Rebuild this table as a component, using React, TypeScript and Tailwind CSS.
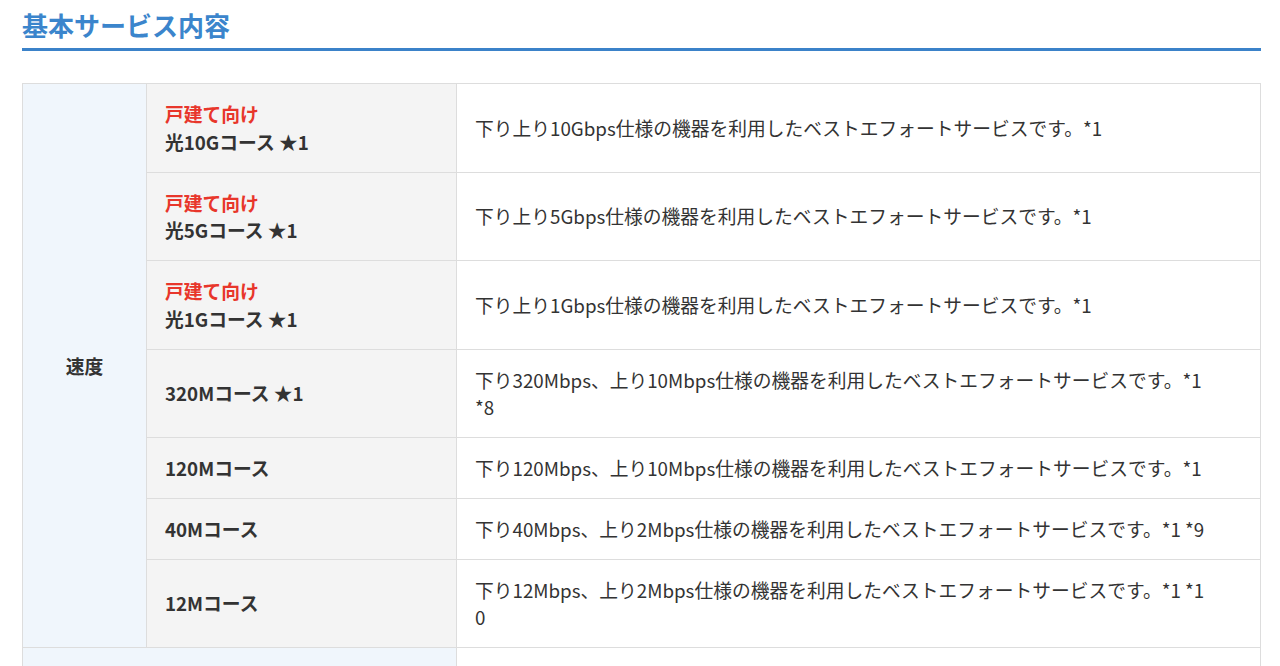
import React from 'react';

type Row = {
  tag?: string;
  name: string;
  desc: React.ReactNode;
};

const ROWS: Row[] = [
  { tag: '戸建て向け', name: '光10Gコース ★1', desc: '下り上り10Gbps仕様の機器を利用したベストエフォートサービスです。*1' },
  { tag: '戸建て向け', name: '光5Gコース ★1', desc: '下り上り5Gbps仕様の機器を利用したベストエフォートサービスです。*1' },
  { tag: '戸建て向け', name: '光1Gコース ★1', desc: '下り上り1Gbps仕様の機器を利用したベストエフォートサービスです。*1' },
  {
    name: '320Mコース ★1',
    desc: (
      <>
        下り320Mbps、上り10Mbps仕様の機器を利用したベストエフォートサービスです。*1
        <br />
        *8
      </>
    ),
  },
  { name: '120Mコース', desc: '下り120Mbps、上り10Mbps仕様の機器を利用したベストエフォートサービスです。*1' },
  { name: '40Mコース', desc: '下り40Mbps、上り2Mbps仕様の機器を利用したベストエフォートサービスです。*1 *9' },
  {
    name: '12Mコース',
    desc: (
      <>
        下り12Mbps、上り2Mbps仕様の機器を利用したベストエフォートサービスです。*1 *1
        <br />0
      </>
    ),
  },
];

export default function App() {
  return (
    <div className="min-h-screen bg-white pl-[22px] pr-[19px] font-['Noto_Sans_CJK_JP',sans-serif] text-[#333333]">
      <h2 className="border-b-[3px] border-[#3b82c9] pt-[5px] pb-[4px] text-[26px] font-bold leading-[39px] text-[#3b85cc]">
        基本サービス内容
      </h2>

      <table className="mt-[32px] w-full table-fixed border-collapse border border-[#dddddd] text-[18.75px] leading-[27.75px]">
        <colgroup>
          <col className="w-[124px]" />
          <col className="w-[310px]" />
          <col />
        </colgroup>
        <tbody>
          {ROWS.map((row, idx) => (
            <tr key={idx}>
              {idx === 0 && (
                <th
                  rowSpan={ROWS.length}
                  className="border border-[#dddddd] bg-[#f0f6fc] text-center align-middle font-bold"
                >
                  速度
                </th>
              )}
              <th className="border border-[#dddddd] bg-[#f4f4f4] px-[18px] py-[16px] text-left align-middle font-bold">
                {row.tag && <span className="block text-[#e8362b]">{row.tag}</span>}
                <span className="block">{row.name}</span>
              </th>
              <td className="whitespace-nowrap border border-[#dddddd] bg-white px-[18px] py-[16px] align-middle">
                {row.desc}
              </td>
            </tr>
          ))}
          <tr>
            <th colSpan={2} className="h-[60px] border border-[#dddddd] bg-[#f0f6fc]"></th>
            <td className="border border-[#dddddd] bg-white"></td>
          </tr>
        </tbody>
      </table>
    </div>
  );
}
